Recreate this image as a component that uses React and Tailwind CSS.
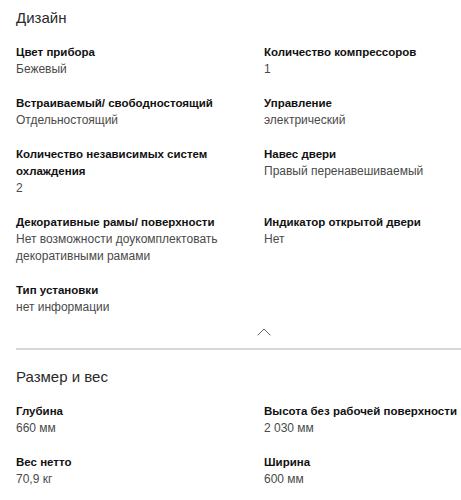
import { ChevronUp } from "lucide-react";

const design = [
  { label: "Цвет прибора", value: "Бежевый" },
  { label: "Количество компрессоров", value: "1" },
  { label: "Встраиваемый/ свободностоящий", value: "Отдельностоящий" },
  { label: "Управление", value: "электрический" },
  { label: "Количество независимых систем охлаждения", value: "2" },
  { label: "Навес двери", value: "Правый перенавешиваемый" },
  { label: "Декоративные рамы/ поверхности", value: "Нет возможности доукомплектовать декоративными рамами" },
  { label: "Индикатор открытой двери", value: "Нет" },
  { label: "Тип установки", value: "нет информации" },
];

const size = [
  { label: "Глубина", value: "660 мм" },
  { label: "Высота без рабочей поверхности", value: "2 030 мм" },
  { label: "Вес нетто", value: "70,9 кг" },
  { label: "Ширина", value: "600 мм" },
];

function SpecGrid({ items }) {
  return (
    <dl className="grid grid-cols-[248px_197px] gap-y-[17px]">
      {items.map((item, i) => (
        <div key={item.label} className={i % 2 === 0 ? "pr-6" : ""}>
          <dt className="text-[11.5px] font-bold leading-[17px] text-[#111]">{item.label}</dt>
          <dd className="text-[12px] leading-[17px] text-[#4a4a4a]">{item.value}</dd>
        </div>
      ))}
    </dl>
  );
}

export default function App() {
  return (
    <div className="min-h-[500px] bg-white pl-4 font-['Liberation_Sans',Arial,sans-serif]">
      <section>
        <h2 className="pt-[7px] text-[15px] leading-[22px] text-[#2a2a2a]">Дизайн</h2>
        <div className="mt-[15px]">
          <SpecGrid items={design} />
        </div>
        <div className="flex h-[32px] items-center justify-center">
          <ChevronUp size={24} strokeWidth={1} className="ml-[51px] text-[#666]" />
        </div>
        <div className="h-[2px] bg-[#d7d7d7]" />
      </section>

      <section>
        <h2 className="pt-[16px] text-[15px] leading-[22px] text-[#2a2a2a]">Размер и вес</h2>
        <div className="mt-[15px]">
          <SpecGrid items={size} />
        </div>
      </section>
    </div>
  );
}
